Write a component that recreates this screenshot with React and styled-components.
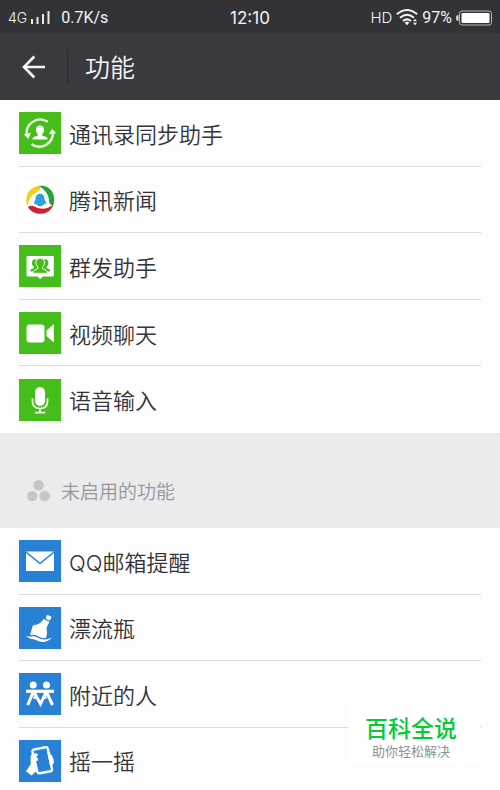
import React from "react";
import styled, { createGlobalStyle } from "styled-components";

const GlobalStyle = createGlobalStyle`
  html { scrollbar-width: none; }
  body {
    margin: 0;
    background: #fdfdfd;
    color: #343338;
    font-family: Roboto, "Noto Sans CJK SC", sans-serif;
  }
  *, *::before, *::after { box-sizing: border-box; }
`;

const Screen = styled.div`
  position: relative;
  display: flex;
  flex-direction: column;
`;

const StatusBar = styled.div`
  display: grid;
  grid-template-columns: 1fr auto 1fr;
  align-items: center;
  height: 33px;
  padding: 2px 8px 0;
  background: #333237;
  color: #f4f4f6;
  font-size: 16px;
  line-height: 20px;
`;

const StatusGroup = styled.div`
  display: flex;
  align-items: center;
  justify-content: ${(p) => (p.$end ? "flex-end" : "flex-start")};
  gap: ${(p) => (p.$end ? 4 : 3)}px;
`;

const Network = styled.span`
  font-family: Inter, sans-serif;
  font-size: 14px;
  font-weight: 300;
`;

const Speed = styled.span`
  margin-left: 8px;
`;

const Hd = styled.span`
  font-family: Inter, sans-serif;
  font-size: 15px;
  font-weight: 300;
`;

const Clock = styled.time`
  font-family: Inter, sans-serif;
  font-size: 17px;
`;

const Header = styled.header`
  display: flex;
  align-items: center;
  height: 67px;
  background: #3a393e;
  color: #f6f6f8;
`;

const BackButton = styled.button`
  display: flex;
  align-items: center;
  justify-content: center;
  width: 68px;
  height: 34px;
  padding: 0;
  border: 0;
  border-right: 1px solid #2b2a2f;
  background: none;
  color: inherit;
`;

const Title = styled.h1`
  margin: 0 0 0 17px;
  padding-top: 4px;
  font-size: 25px;
  line-height: 32px;
  font-weight: 350;
`;

const List = styled.ul`
  display: grid;
  grid-auto-rows: 1fr;
  min-height: ${(p) => p.$height}px;
  margin: 0;
  padding: 0 19px;
  list-style: none;
`;

const Row = styled.li`
  border-bottom: 1px solid #dddddf;
  &:last-child { border-bottom-color: transparent; }
`;

const RowLink = styled.a`
  display: flex;
  align-items: center;
  gap: 8px;
  height: 100%;
  padding-top: 1px;
  color: inherit;
  text-decoration: none;
`;

const RowLabel = styled.span`
  padding-top: 3px;
  font-family: Inter, "Noto Sans CJK SC", sans-serif;
  font-size: 22px;
  line-height: 32px;
  font-weight: 350;
`;

const Tile = styled.svg`
  flex: none;
  width: 42px;
  height: 42px;
  background: ${(p) => p.$color};
`;

const SectionHeading = styled.h2`
  display: flex;
  align-items: center;
  gap: 11px;
  min-height: 95px;
  margin: 0;
  padding: 20px 27px 0;
  background: #ebeaec;
  color: #97969a;
  font-size: 19px;
  line-height: 28px;
  font-weight: 350;
`;

const SectionLabel = styled.span`
  padding-top: 4px;
`;

const Watermark = styled.aside`
  position: fixed;
  right: 20px;
  bottom: 25px;
  display: flex;
  flex-direction: column;
  align-items: center;
  width: 132px;
  padding: 14px 6px 4px 0;
  background: #ffffff;
  color: #929292;
  font-size: 13px;
  line-height: 18px;
`;

const Brand = styled.strong`
  color: #05cb35;
  font-size: 23px;
  line-height: 26px;
  font-weight: 500;
`;

const GREEN = "#45bd1b";
const BLUE = "#2981d5";

const SignalIcon = () => (
  <svg width="20" height="14" viewBox="0 0 20 14" stroke="#e8e8ea" strokeWidth="2" aria-hidden="true">
    <path d="M2 8v5M7.500 6v7M13 3v10M18.500 0v13" />
  </svg>
);

const WifiIcon = () => (
  <svg width="22" height="17" viewBox="0 0 22 17" fill="none" stroke="#f4f4f6" strokeWidth="2" aria-hidden="true">
    <path d="M.8 5.200Q11-3.200 21.200 5.200M4 8.700Q11 2.800 18 8.700M7 12Q11 8.700 15 12" />
    <path d="M8.600 13.500Q11 11.800 13.400 13.500L11 16.300Z" fill="#f4f4f6" stroke="none" />
    <path d="M17 12.200 19 9.800 21 12.200ZM17 13.800 19 16.200 21 13.800Z" fill="#f4f4f6" stroke="none" />
  </svg>
);

const BatteryIcon = () => (
  <svg width="36" height="16" viewBox="0 0 36 16" aria-hidden="true">
    <rect x="3.500" y="1" width="32" height="14" rx="2.500" fill="none" stroke="#b9b9bd" />
    <rect x="5.500" y="3" width="28" height="10" rx="1" fill="#fff" />
    <path d="M2.500 5Q0 5 0 8T2.500 11Z" fill="#dedee0" />
  </svg>
);

const BackIcon = () => (
  <svg width="24" height="24" viewBox="0 0 24 24" fill="none" stroke="currentColor" strokeWidth="2.600" aria-hidden="true">
    <path d="M12.300 1.500 2 12l10.300 10.500M2.300 12H23" />
  </svg>
);

const DotsIcon = () => (
  <svg width="23" height="22" viewBox="0 0 23 22" fill="#c6c5c8" aria-hidden="true">
    <circle cx="11.500" cy="5.200" r="5.200" />
    <circle cx="5.200" cy="16" r="5.200" />
    <circle cx="17.600" cy="16" r="5.200" />
  </svg>
);

const glyphs = {
  sync: (
    <>
      <g fill="none" stroke="#f1ffe9" strokeWidth="2.300">
        <path d="M28.800 9.800A13.600 13.600 0 0 0 7.800 23" />
        <path d="M12.600 32.200A13.600 13.600 0 0 0 33.800 19.500" />
      </g>
      <path d="M4.800 22.200 12 20.800 9.200 27ZM29.600 22.200 33.200 16.800 37.200 21.200Z" fill="#f1ffe9" />
      <path d="M21 13.500c-3 0-4.400 2.200-4 5 .2 1.800 1 3 1.900 3.800v1.200l-4.300 1.600c-1 .5-1.100 1.200-1.100 2.400h15c0-1.200-.1-1.900-1.100-2.400l-4.300-1.600v-1.200c.9-.8 1.700-2 1.900-3.800.4-2.800-1-5-4-5Z" fill="#fff" />
    </>
  ),
  news: (
    <>
      <path d="M8.500 27C4.500 17.500 10.500 7.500 20 7C22 8.500 21.500 11 18 13C12.500 16 9.800 20 8.500 27Z" fill="#f3cd25" />
      <path d="M19.500 7C29.500 5 38 14 34.500 26C31.500 26.800 30 24.500 30 21.500C29.500 15 26 10.500 19.500 7Z" fill="#24a33f" />
      <path d="M34.500 25.500C31 36 16.500 38.500 9 28.500C10 26 13 26.200 16.500 28C22.500 31 28.500 30 34.500 25.500Z" fill="#d3202c" />
      <path d="M21 14.800c-3 0-4.400 2.400-4.400 5 0 1-1.600 2.600-1.600 4.500 0 1.300 1.300.7 1.900.2 1 3.700 7.400 3.700 8.400 0 .6.500 1.900 1.100 1.900-.2 0-1.900-1.800-3.500-1.800-4.500 0-2.600-1.400-5-4.400-5Z" fill="#2f9fe0" />
    </>
  ),
  group: (
    <>
      <path d="M8.500 11h25.300q1 0 1 1v18.400q0 1-1 1H24L21.200 34l-2.800-2.600H8.500q-1 0-1-1V12q0-1 1-1Z" fill="#fff" />
      <g fill={GREEN}>
        <ellipse cx="16" cy="18" rx="3" ry="3.800" />
        <ellipse cx="26.400" cy="18" rx="3" ry="3.800" />
        <path d="M14.800 20.500v2.500l-2.600 1.300q-1 .6-1 2.200h20q0-1.600-1-2.200L27.600 23v-2.500Z" />
        <path d="M21.200 13.200c-3.200 0-4.600 2.300-4.200 5 .2 1.700 1 3 1.900 3.700v1.700l-3.600 1.800q-1.400.8-1.400 2.900h14.600q0-2.100-1.400-2.900l-3.600-1.800v-1.700c.9-.7 1.700-2 1.900-3.700.4-2.700-1-5-4.200-5Z" stroke="#fff" strokeWidth="1" />
      </g>
    </>
  ),
  video: (
    <g fill="#fff">
      <rect x="7.500" y="12.500" width="18" height="18" rx="3" />
      <path d="M34.800 12v18.500l-7.300-6.500v-5.500Z" />
    </g>
  ),
  mic: (
    <>
      <rect x="16" y="8" width="10" height="19" rx="5" fill="#fff" />
      <path d="M13.500 19.500v3q0 7 7.500 7t7.500-7v-3M21 29.500v4M15.800 33.700h10.500" fill="none" stroke="#efffe7" strokeWidth="1.700" />
    </>
  ),
  mail: (
    <>
      <rect x="7" y="11.500" width="28" height="19.500" fill="#fff" />
      <path d="m7 12 14 11.500L35 12" fill="none" stroke={BLUE} strokeWidth="1.500" />
    </>
  ),
  bottle: (
    <g fill="#fff">
      <path d="M24.500 12 30.500 14.800 27.800 20C27 23 29 25 27.500 29L26.800 31C23.500 31.500 21 30.500 18.500 29C16 27.500 13.500 27.500 11 28.200L13.500 19.500C14 18.500 15 18 16.500 17.800C20 17.300 22.500 15.500 24.500 12Z" />
      <path d="M26.600 11.800 28 7.800 32.400 9.500 32 12 30.200 13.400Z" />
      <path d="M7 29C10.500 30.500 14 27.800 18.500 30.500C23 33.200 27.500 33 33 30.500C28 36 22 35.800 17.500 33.300C13.500 31.200 10 32.500 7 29Z" />
    </g>
  ),
  people: (
    <>
      <circle cx="14.200" cy="12" r="3.500" fill="#fff" />
      <circle cx="27.500" cy="12" r="3.500" fill="#fff" />
      <path d="M7 18.300h28" stroke="#fff" strokeWidth="3.200" />
      <path d="M14.200 19 8.700 32M15 19 21.500 31 27 19M27.500 19l6 13M18.500 25l-4-1M23.500 25l4-1" fill="none" stroke="#fff" strokeWidth="3" />
    </>
  ),
  shake: (
    <>
      <path d="m15 9.500 11.500-2.300q1.800-.3 2.200 1.400l4.300 20.500q.3 1.800-1.400 2.200l-11 2q-1.700.3-2.200-1.400L13.500 12q-.4-2 1.500-2.500Z" fill={BLUE} stroke="#f3faff" strokeWidth="2.400" />
      <path d="M14.500 13.500c-2 .3-3 1.500-2.800 3.300v7.500L7 31.300l5.500 4.200 4.500-4 2 .7-2-10.700 2-1.300c.2-1.800-.8-3-2.200-3.200l2.200-1.800q-.2-2.700-4.500-1.700Z" fill="#fff" />
      <path d="M29 11.500q3 .5 2.500 3 2.500.7 2 3.200 1.700 1 1 3 1.500 2-1.500 4.800l-2 .3-2.600-13Z" fill="#fff" />
    </>
  ),
};

const enabled = [
  ["通讯录同步助手", "sync", GREEN],
  ["腾讯新闻", "news", "#fff"],
  ["群发助手", "group", GREEN],
  ["视频聊天", "video", GREEN],
  ["语音输入", "mic", GREEN],
];

const disabled = [
  ["QQ邮箱提醒", "mail", BLUE],
  ["漂流瓶", "bottle", BLUE],
  ["附近的人", "people", BLUE],
  ["摇一摇", "shake", BLUE],
];

const FeatureList = ({ items, height }) => (
  <List $height={height}>
    {items.map(([label, icon, color]) => (
      <Row key={icon}>
        <RowLink href={`#${icon}`}>
          <Tile viewBox="0 0 42 42" $color={color} aria-hidden="true">
            {glyphs[icon]}
          </Tile>
          <RowLabel>{label}</RowLabel>
        </RowLink>
      </Row>
    ))}
  </List>
);

export default function App() {
  return (
    <>
      <GlobalStyle />
      <Screen lang="zh-CN">
        <StatusBar>
          <StatusGroup>
            <Network>4G</Network>
            <SignalIcon />
            <Speed>0.7K/s</Speed>
          </StatusGroup>
          <Clock>12:10</Clock>
          <StatusGroup $end>
            <Hd>HD</Hd>
            <WifiIcon />
            <span>97%</span>
            <BatteryIcon />
          </StatusGroup>
        </StatusBar>
        <Header>
          <BackButton aria-label="返回">
            <BackIcon />
          </BackButton>
          <Title>功能</Title>
        </Header>
        <main>
          <FeatureList items={enabled} height={333} />
          <SectionHeading>
            <DotsIcon />
            <SectionLabel>未启用的功能</SectionLabel>
          </SectionHeading>
          <FeatureList items={disabled} height={266} />
        </main>
        <Watermark>
          <Brand>百科全说</Brand>
          <span>助你轻松解决</span>
        </Watermark>
      </Screen>
    </>
  );
}
